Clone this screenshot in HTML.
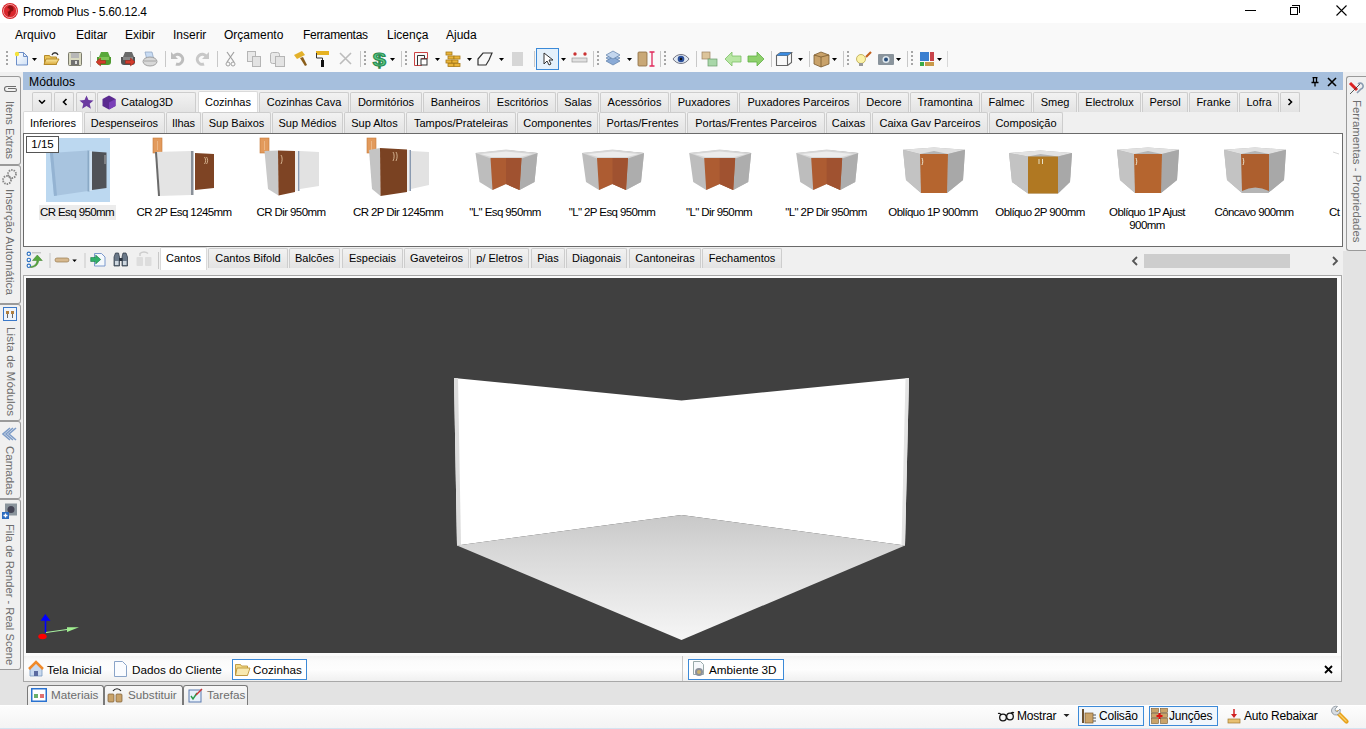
<!DOCTYPE html>
<html><head><meta charset="utf-8">
<style>
*{box-sizing:border-box;margin:0;padding:0}
html,body{width:1366px;height:729px;overflow:hidden}
body{position:relative;background:#f0f0f0;font-family:"Liberation Sans",sans-serif;font-size:12px;color:#000}
.a{position:absolute}
#title{left:0;top:0;width:1366px;height:23px;background:#fff}
#menu{left:0;top:23px;width:1366px;height:23px;background:#f9f9f9}
#menu span{position:absolute;top:5px;font-size:12px;color:#000}
#tb{left:0;top:46px;width:1366px;height:26px;background:#f9f9f9}
#hdr{left:23px;top:72px;width:1320px;height:18px;background:#a6bfdd}
.tab{position:absolute;height:20px;background:linear-gradient(#f2f2f2,#e3e3e3);border:1px solid #cdcdcd;border-bottom:none;border-radius:2px 2px 0 0;text-align:center;font-size:11px;line-height:19px;white-space:nowrap;color:#000;overflow:hidden}
.tab.sel{background:#fff;border-color:#dadada}
#thumbs{left:23px;top:133px;width:1320px;height:114px;background:#fff;border:1px solid #6a6a6a}
.lbl{position:absolute;width:120px;text-align:center;font-size:11.5px;line-height:13px;color:#000;letter-spacing:-0.6px}
#vp{left:23px;top:275px;width:1319px;height:381px;background:#fbfbfb;border:1px solid #a8a8a8;border-bottom:none}
#vpd{left:26px;top:278px;width:1311px;height:375px;background:#404040;overflow:hidden}
#docs{left:23px;top:656px;width:1319px;height:26px;background:linear-gradient(#f3f3f3 0,#fbfbfb 20%,#fdfdfd 55%,#f0f0f0 100%);border:1px solid #a8a8a8;border-top:none}
#status{left:0;top:705px;width:1366px;height:24px;background:linear-gradient(#fdfdfd,#f3f3f3);border-top:1px solid #fff}
.vt{position:absolute;left:0;width:21px;background:#f0f0f0;border:1px solid #9a9a9a;border-left:none;border-radius:0 3px 3px 0}
.vtxt{position:absolute;left:4px;writing-mode:vertical-rl;font-size:11.5px;color:#6d6d6d;white-space:nowrap}
.dt{position:absolute;font-size:12px;color:#000;white-space:nowrap}
.sel3{position:absolute;border:1px solid #3c8ad8;background:#fff}
</style></head><body>
<div id="title" class="a">
 <svg class="a" style="left:1px;top:2px" width="18" height="18" viewBox="0 0 18 18"><circle cx="9" cy="9" r="8" fill="#d9262c"/><circle cx="9" cy="9" r="6.6" fill="none" stroke="#f3b0b0" stroke-width="0.8"/><path d="M8 3.5c3 0 5 1.5 4.5 4c-0.3 1.5-1.5 2-2.5 2.2c-0.5 2-1 4-3 5c0.5-1.5 0.3-3.5-0.5-5c1-0.2 2.2-0.8 2.2-2c0-1-1-1.8-2.5-1.8z" fill="#8a1010"/></svg>
 <div class="a" style="left:23px;top:5px;font-size:12px;letter-spacing:-0.25px">Promob Plus - 5.60.12.4</div>
 <div class="a" style="left:1245px;top:10px;width:11px;height:1px;background:#000"></div>
 <div class="a" style="left:1290px;top:7px;width:8px;height:8px;border:1px solid #000"></div>
 <div class="a" style="left:1292px;top:5px;width:8px;height:8px;border-top:1px solid #000;border-right:1px solid #000"></div>
 <svg class="a" style="left:1335px;top:4px" width="13" height="13" viewBox="0 0 13 13"><path d="M1.5 1.5L11.5 11.5M11.5 1.5L1.5 11.5" stroke="#000" stroke-width="1.1"/></svg>
</div>
<div id="menu" class="a">
 <span style="left:15px">Arquivo</span>
 <span style="left:76px">Editar</span>
 <span style="left:125px">Exibir</span>
 <span style="left:173px">Inserir</span>
 <span style="left:224px">Orçamento</span>
 <span style="left:303px;letter-spacing:-0.3px">Ferramentas</span>
 <span style="left:387px">Licença</span>
 <span style="left:446px">Ajuda</span>
</div>
<div id="tb" class="a"></div>
<svg class="a" style="left:0;top:46px" width="960" height="26" viewBox="0 46 960 26">
<defs>
<linearGradient id="gfold" x1="0" y1="0" x2="0" y2="1"><stop offset="0" stop-color="#fbe9a0"/><stop offset="1" stop-color="#d9a93c"/></linearGradient>
<linearGradient id="gpage" x1="0" y1="0" x2="1" y2="1"><stop offset="0" stop-color="#fff"/><stop offset="1" stop-color="#cfe0f5"/></linearGradient>
</defs>
<g fill="#a6a6a6">
<rect x="6" y="51" width="2" height="2"/><rect x="6" y="55" width="2" height="2"/><rect x="6" y="59" width="2" height="2"/><rect x="6" y="63" width="2" height="2"/>
</g>
<!-- new -->
<path d="M16.5 52.5h7l4 4v8.5h-11z" fill="url(#gpage)" stroke="#6d8fc8"/>
<path d="M23.5 52.5v4h4" fill="none" stroke="#6d8fc8"/>
<circle cx="17" cy="54" r="2.2" fill="#f5e33a"/>
<path d="M32 58h5l-2.5 3z" fill="#000"/>
<!-- open -->
<path d="M44.5 55.5h5l1 1.5h6v7.5h-12z" fill="#e9c45a" stroke="#b58a2a"/>
<path d="M46 59h13l-3 5.5h-12z" fill="url(#gfold)" stroke="#b58a2a"/>
<path d="M52 55c1-3 5-3 6 0" fill="none" stroke="#333" stroke-width="1.3"/>
<!-- save -->
<rect x="68.5" y="52.5" width="13" height="13" rx="1" fill="#d9d9c0" stroke="#7c7c6e"/>
<rect x="71" y="53" width="8" height="5" fill="#b7b7b7"/>
<rect x="71" y="60" width="8" height="5" fill="#707070"/><rect x="75" y="61" width="2" height="3" fill="#ddd"/>
<rect x="90" y="51" width="1" height="16" fill="#c8c8c8"/>
<!-- green/red -->
<path d="M99 57l2-5h7l2 5" fill="#58a83a"/>
<path d="M97 57h14v5c0 2-1 3-3 3h-8c-2 0-3-1-3-3z" fill="#4f9a30"/>
<rect x="99" y="57" width="10" height="3" fill="#7cc455"/>
<path d="M96 62l4.5-4v2.5h5v3h-5v2.5z" fill="#d33b2c" stroke="#a52418" stroke-width="0.5"/>
<path d="M123 57l2-5h7l2 5" fill="#6a6a6a"/>
<path d="M121 57h14v5c0 2-1 3-3 3h-8c-2 0-3-1-3-3z" fill="#555"/>
<rect x="123" y="57" width="10" height="3" fill="#888"/>
<path d="M135 62l-4.5-4v2.5h-5v3h5v2.5z" fill="#d33b2c" stroke="#a52418" stroke-width="0.5"/>
<!-- printer -->
<path d="M145 52h7l1.5 6h-7z" fill="#c9dcf3" stroke="#8aa0c0" stroke-width="0.7"/>
<ellipse cx="150" cy="61.5" rx="7" ry="4.5" fill="#d8d8d8" stroke="#8f8f8f" stroke-width="0.8"/>
<path d="M144 61h12" stroke="#9a9a9a" stroke-width="0.8"/>
<rect x="165" y="51" width="1" height="16" fill="#c8c8c8"/>
<!-- undo redo -->
<path d="M174 56a5 5 0 1 1 2 8" fill="none" stroke="#bdbdbd" stroke-width="3"/>
<path d="M171 52v7h7z" fill="#bdbdbd"/>
<path d="M206 56a5 5 0 1 0 -2 8" fill="none" stroke="#c8c8c8" stroke-width="3"/>
<path d="M209 52v7h-7z" fill="#c8c8c8"/>
<rect x="217" y="51" width="1" height="16" fill="#c8c8c8"/>
<!-- cut -->
<path d="M227 52l7 10M234 52l-7 10" stroke="#a0a0a0" stroke-width="1.2"/>
<circle cx="228" cy="64" r="2" fill="none" stroke="#a0a0a0"/><circle cx="233" cy="64" r="2" fill="none" stroke="#a0a0a0"/>
<!-- copy -->
<rect x="247.5" y="51.5" width="8" height="10" fill="#e8e8e8" stroke="#b5b5b5"/>
<rect x="252.5" y="56.5" width="8" height="10" fill="#e3e3e3" stroke="#b5b5b5"/>
<!-- paste -->
<rect x="270.5" y="52.5" width="9" height="11" rx="2" fill="#e8e8e8" stroke="#b5b5b5"/>
<rect x="275.5" y="56.5" width="9" height="10" fill="#e3e3e3" stroke="#b5b5b5"/>
<!-- hammer -->
<path d="M294 55l8-4 3 4-8 4z" fill="#e3b12b"/>
<path d="M300 58l5 8 2-1-4-8z" fill="#8b5e1a"/>
<!-- roller -->
<rect x="316" y="51" width="13" height="4" fill="#e6b222"/>
<path d="M316.5 53v5h6v3" fill="none" stroke="#333"/>
<rect x="321" y="60" width="3" height="7" fill="#111"/>
<!-- X -->
<path d="M340 53l11 11M351 53l-11 11" stroke="#bcbcbc" stroke-width="1.6"/>
<rect x="360" y="51" width="1" height="16" fill="#c8c8c8"/>
<g fill="#a6a6a6"><rect x="364" y="51" width="2" height="2"/><rect x="364" y="55" width="2" height="2"/><rect x="364" y="59" width="2" height="2"/><rect x="364" y="63" width="2" height="2"/></g>
<!-- dollar -->
<text x="371.5" y="66.5" font-family="Liberation Sans" font-weight="bold" font-size="19" fill="#5cc884" stroke="#2a8a50" stroke-width="1" transform="translate(-91.5 0) scale(1.25 1)">$</text>
<path d="M390 58h5l-2.5 3z" fill="#000"/>
<rect x="401" y="51" width="1" height="16" fill="#c8c8c8"/>
<g fill="#a6a6a6"><rect x="405" y="51" width="2" height="2"/><rect x="405" y="55" width="2" height="2"/><rect x="405" y="59" width="2" height="2"/><rect x="405" y="63" width="2" height="2"/></g>
<!-- wall -->
<path d="M414.5 52.5h13v6h-6v7h-7z" fill="none" stroke="#c44"/>
<path d="M417.5 55.5h7v3M417.5 55.5v10" fill="none" stroke="#333"/>
<rect x="421" y="59" width="6" height="6" fill="#fff" stroke="#333"/>
<path d="M435 58h5l-2.5 3z" fill="#000"/>
<!-- bricks -->
<g fill="#e9b43a" stroke="#a87a18" stroke-width="0.8">
<rect x="446" y="52" width="6" height="3"/><rect x="448" y="56" width="6" height="3"/><rect x="454" y="56" width="6" height="3"/><rect x="446" y="60" width="6" height="3"/><rect x="452" y="60" width="6" height="3"/><rect x="448" y="63.5" width="6" height="3"/><rect x="454" y="63.5" width="6" height="3"/></g>
<path d="M467 58h5l-2.5 3z" fill="#000"/>
<!-- shape -->
<path d="M478 59l5-6h9l-3 7-3 5h-8z" fill="none" stroke="#333" stroke-width="1.2"/>
<path d="M499 58h5l-2.5 3z" fill="#000"/>
<rect x="512" y="52" width="11" height="14" fill="#d6d6d6"/>
<rect x="534" y="51" width="1" height="16" fill="#c8c8c8"/>
<!-- selected pointer -->
<rect x="536.5" y="48.5" width="22" height="21" fill="#e5f1fb" stroke="#3c8ad8"/>
<path d="M544 53v11l3-3 2 4 2-1-2-4h4z" fill="#fff" stroke="#333"/>
<path d="M561 58h5l-2.5 3z" fill="#000"/>
<!-- ruler -->
<rect x="572" y="58" width="15" height="4" fill="#e0e0e0" stroke="#999" stroke-width="0.7"/>
<circle cx="575" cy="54" r="1.7" fill="#c33"/><circle cx="585" cy="54" r="1.7" fill="#c33"/>
<rect x="593" y="51" width="1" height="16" fill="#c8c8c8"/>
<g fill="#a6a6a6"><rect x="597" y="51" width="2" height="2"/><rect x="597" y="55" width="2" height="2"/><rect x="597" y="59" width="2" height="2"/><rect x="597" y="63" width="2" height="2"/></g>
<!-- layers -->
<path d="M606 58l7-4 7 4-7 4z" fill="#9fbbe0" stroke="#5f7fa8" stroke-width="0.7"/>
<path d="M606 61l7-4 7 4-7 4z" fill="#8aaad6" stroke="#5f7fa8" stroke-width="0.7"/>
<path d="M606 55l7-4 7 4-7 4z" fill="#c3d6ee" stroke="#5f7fa8" stroke-width="0.7"/>
<path d="M627 58h5l-2.5 3z" fill="#000"/>
<!-- door -->
<rect x="638" y="52" width="9" height="14" rx="1" fill="#c9a877" stroke="#8a6a40" stroke-width="0.8"/>
<path d="M652 52v14M649.5 52h5M649.5 66h5" stroke="#e0285a" stroke-width="1.3"/>
<rect x="660" y="51" width="1" height="16" fill="#c8c8c8"/>
<g fill="#a6a6a6"><rect x="664" y="51" width="2" height="2"/><rect x="664" y="55" width="2" height="2"/><rect x="664" y="59" width="2" height="2"/><rect x="664" y="63" width="2" height="2"/></g>
<!-- eye -->
<path d="M673 59c4-6 12-6 16 0c-4 6-12 6-16 0z" fill="#dfe8f2" stroke="#556" stroke-width="0.8"/>
<circle cx="681" cy="59" r="3.3" fill="#2b4f9b"/><circle cx="681" cy="59" r="1.2" fill="#111"/>
<rect x="696" y="51" width="1" height="16" fill="#c8c8c8"/>
<!-- cubes -->
<rect x="702" y="52" width="8" height="7" fill="#dcc49a" stroke="#9a8060" stroke-width="0.7"/>
<rect x="708" y="59" width="9" height="7" fill="#a9d7a9" stroke="#6a9a6a" stroke-width="0.7"/>
<!-- arrows -->
<path d="M725 59l7-7v4h9v6h-9v4z" fill="#b8e6a4" stroke="#7cbf66" stroke-width="0.8"/>
<path d="M764 59l-7-7v4h-9v6h9v4z" fill="#8ed06c" stroke="#5fae44" stroke-width="0.8"/>
<rect x="771" y="51" width="1" height="16" fill="#c8c8c8"/>
<!-- box3d -->
<path d="M776.5 55.5h11v10h-11z M776.5 55.5l4-3h11l-4 3 M791.5 52.5v10l-4 3" fill="none" stroke="#666" stroke-width="1.1"/>
<path d="M780.5 52.5h11l-4 3h-11z" fill="#3b8be0"/>
<path d="M798 58h5l-2.5 3z" fill="#000"/>
<rect x="809" y="51" width="1" height="16" fill="#c8c8c8"/>
<!-- crate -->
<path d="M814 55l7-3 8 3v9l-8 3-7-3z" fill="#c9a26a" stroke="#7a5a30" stroke-width="0.8"/>
<path d="M821 57v10M814 55l7 2 8-2" fill="none" stroke="#7a5a30" stroke-width="0.8"/>
<path d="M832 58h5l-2.5 3z" fill="#000"/>
<rect x="843" y="51" width="1" height="16" fill="#c8c8c8"/>
<g fill="#a6a6a6"><rect x="847" y="51" width="2" height="2"/><rect x="847" y="55" width="2" height="2"/><rect x="847" y="59" width="2" height="2"/><rect x="847" y="63" width="2" height="2"/></g>
<!-- bulb -->
<circle cx="861" cy="59" r="4.5" fill="#fbf2a8" stroke="#b9a64a" stroke-width="0.8"/>
<rect x="859" y="63" width="4" height="3" fill="#999"/>
<path d="M866 57l5-5" stroke="#c3601c" stroke-width="2.2"/>
<!-- camera -->
<rect x="878" y="54" width="16" height="11" rx="1" fill="#8a949c"/>
<circle cx="886" cy="59.5" r="3.5" fill="#dfe8ee"/><circle cx="886" cy="59.5" r="2" fill="#2b4f7b"/>
<path d="M896 58h5l-2.5 3z" fill="#000"/>
<rect x="907" y="51" width="1" height="16" fill="#c8c8c8"/>
<g fill="#a6a6a6"><rect x="911" y="51" width="2" height="2"/><rect x="911" y="55" width="2" height="2"/><rect x="911" y="59" width="2" height="2"/><rect x="911" y="63" width="2" height="2"/></g>
<!-- colors -->
<rect x="920" y="52" width="9" height="9" fill="#3a7fd0"/><rect x="930" y="52" width="4" height="9" fill="#c8434a"/>
<rect x="920" y="62" width="4" height="4" fill="#3bab4a"/><rect x="925" y="62" width="9" height="4" fill="#c99a4a"/>
<path d="M937 58h5l-2.5 3z" fill="#000"/>
<rect x="947" y="51" width="1" height="16" fill="#d8d8d8"/>
</svg>


<!-- left vertical tabs -->
<div class="vt" style="top:76px;height:89px"><svg class="a" style="left:3px;top:7px" width="15" height="9" viewBox="0 0 15 9"><path d="M13 2.5H4a2.5 2.5 0 0 0 0 5h8a1.5 1.5 0 0 0 0-3H5" fill="none" stroke="#6d6d6d" stroke-width="1.1"/></svg><div class="vtxt" style="top:24px;font-size:11px">Itens Extras</div></div>
<div class="vt" style="top:165px;height:139px"><svg class="a" style="left:2px;top:3px" width="16" height="16" viewBox="0 0 16 16"><circle cx="10" cy="5" r="4" fill="none" stroke="#888" stroke-width="1.8" stroke-dasharray="1.5 1"/><circle cx="5" cy="11" r="4" fill="none" stroke="#888" stroke-width="1.8" stroke-dasharray="1.5 1"/></svg><div class="vtxt" style="top:23px;font-size:11.7px">Inserção Automática</div></div>
<div class="vt" style="top:304px;height:117px"><svg class="a" style="left:3px;top:2px" width="14" height="14" viewBox="0 0 14 14"><rect x="0.5" y="0.5" width="13" height="13" fill="#eef4fb" stroke="#3a78c8"/><rect x="3" y="4" width="3" height="3" fill="#b08040"/><rect x="8" y="4" width="3" height="3" fill="#b08040"/><path d="M4.5 7v4M9.5 7v4" stroke="#666"/></svg><div class="vtxt" style="top:22px;font-size:11.8px">Lista de Módulos</div></div>
<div class="vt" style="top:421px;height:78px"><svg class="a" style="left:2px;top:5px" width="16" height="14" viewBox="0 0 16 14"><path d="M8 1L1 7l7 6M11 1L4 7l7 6M14 1L7 7l7 6" fill="none" stroke="#7c9cc8" stroke-width="1.6"/></svg><div class="vtxt" style="top:24px">Camadas</div></div>
<div class="vt" style="top:499px;height:171px"><svg class="a" style="left:2px;top:3px" width="16" height="16" viewBox="0 0 16 16"><rect x="3" y="0.5" width="12" height="12" fill="#8a949c"/><circle cx="9" cy="6.5" r="3.5" fill="#445"/><rect x="0" y="9" width="7" height="7" fill="#2c6cc0"/><path d="M3.5 10.5v4M1.5 12.5h4" stroke="#fff" stroke-width="1.3"/></svg><div class="vtxt" style="top:24px;font-size:11.2px">Fila de Render - Real Scene</div></div>

<!-- right vertical tab -->
<div class="a" style="left:1346px;top:76px;width:20px;height:175px;background:#f0f0f0;border:1px solid #9a9a9a;border-right:none;border-radius:3px 0 0 3px"></div>
<svg class="a" style="left:1348px;top:80px" width="16" height="16" viewBox="0 0 16 16"><path d="M2 3l7 7" stroke="#d22" stroke-width="3"/><path d="M2 14L13 3" stroke="#333" stroke-width="0.8"/><path d="M10 4a3 3 0 1 1 3 5l-4 4" fill="none" stroke="#8a9ab0" stroke-width="1.6"/></svg>
<div class="vtxt" style="left:1350.5px;top:100px;font-size:11.4px">Ferramentas - Propriedades</div>

<div id="hdr" class="a"><div class="a" style="left:6px;top:3px;font-size:12.2px">Módulos</div>
 <svg class="a" style="left:1287px;top:5px" width="10" height="10" viewBox="0 0 10 10"><path d="M2.5 0.5h5M3.5 0.5v5M6.5 0.5v5M1.5 5.5h7M5 5.5v4" stroke="#000" stroke-width="1.3" fill="none"/></svg>
 <svg class="a" style="left:1304px;top:5px" width="10" height="10" viewBox="0 0 10 10"><path d="M1 1L9 9M9 1L1 9" stroke="#000" stroke-width="1.6"/></svg>
</div>

<!-- tab row 1 -->
<div class="tab" style="left:32px;top:92px;width:20px"><svg class="a" style="left:5px;top:6px" width="8" height="6" viewBox="0 0 8 6"><path d="M1 1.2L4 4.2L7 1.2" fill="none" stroke="#000" stroke-width="1.6"/></svg></div>
<div class="tab" style="left:54px;top:92px;width:20px"><svg class="a" style="left:7px;top:5px" width="6" height="8" viewBox="0 0 6 8"><path d="M4.5 1L1.5 4L4.5 7" fill="none" stroke="#000" stroke-width="1.6"/></svg></div>
<div class="tab" style="left:76px;top:92px;width:20px"><svg class="a" style="left:2px;top:2px" width="15" height="15" viewBox="0 0 15 15"><path d="M7.5 0.5l2 4.6 5 .4-3.8 3.3 1.2 4.9-4.4-2.7-4.4 2.7 1.2-4.9L0.5 5.5l5-.4z" fill="#6b3aa0"/></svg></div>
<div class="tab" style="left:97px;top:92px;width:99px;text-align:left;padding-left:23px">Catalog3D<svg class="a" style="left:4px;top:2px" width="14" height="15" viewBox="0 0 14 15"><path d="M7 0.5L13.5 4v7L7 14.5 0.5 11V4z" fill="#5b2a90"/><path d="M7 7.5L13.5 4v7L7 14.5z" fill="#7a3fb8"/></svg></div>
<div class="tab sel" style="left:198px;top:91px;width:60px;height:21px;line-height:21px">Cozinhas</div>
<div class="tab" style="left:259px;top:92px;width:90px">Cozinhas Cava</div>
<div class="tab" style="left:350px;top:92px;width:72px">Dormitórios</div>
<div class="tab" style="left:423px;top:92px;width:65px">Banheiros</div>
<div class="tab" style="left:489px;top:92px;width:67px">Escritórios</div>
<div class="tab" style="left:557px;top:92px;width:42px">Salas</div>
<div class="tab" style="left:600px;top:92px;width:69px">Acessórios</div>
<div class="tab" style="left:670px;top:92px;width:68px">Puxadores</div>
<div class="tab" style="left:739px;top:92px;width:119px">Puxadores Parceiros</div>
<div class="tab" style="left:859px;top:92px;width:50px">Decore</div>
<div class="tab" style="left:910px;top:92px;width:70px">Tramontina</div>
<div class="tab" style="left:981px;top:92px;width:51px">Falmec</div>
<div class="tab" style="left:1033px;top:92px;width:44px">Smeg</div>
<div class="tab" style="left:1078px;top:92px;width:63px">Electrolux</div>
<div class="tab" style="left:1142px;top:92px;width:46px">Persol</div>
<div class="tab" style="left:1189px;top:92px;width:49px">Franke</div>
<div class="tab" style="left:1239px;top:92px;width:40px">Lofra</div>
<div class="tab" style="left:1280px;top:92px;width:20px"><svg class="a" style="left:6px;top:5px" width="6" height="8" viewBox="0 0 6 8"><path d="M1.5 1L4.5 4L1.5 7" fill="none" stroke="#000" stroke-width="1.6"/></svg></div>

<!-- tab row 2 -->
<div class="tab sel" style="left:23px;top:111px;width:60px;height:22px;line-height:23px">Inferiores</div>
<div class="tab" style="left:84px;top:112px;width:81px;height:21px;line-height:21px">Despenseiros</div>
<div class="tab" style="left:166px;top:112px;width:35px;height:21px;line-height:21px">Ilhas</div>
<div class="tab" style="left:202px;top:112px;width:69px;height:21px;line-height:21px">Sup Baixos</div>
<div class="tab" style="left:272px;top:112px;width:71px;height:21px;line-height:21px">Sup Médios</div>
<div class="tab" style="left:344px;top:112px;width:61px;height:21px;line-height:21px">Sup Altos</div>
<div class="tab" style="left:406px;top:112px;width:110px;height:21px;line-height:21px">Tampos/Prateleiras</div>
<div class="tab" style="left:517px;top:112px;width:81px;height:21px;line-height:21px">Componentes</div>
<div class="tab" style="left:599px;top:112px;width:87px;height:21px;line-height:21px">Portas/Frentes</div>
<div class="tab" style="left:687px;top:112px;width:138px;height:21px;line-height:21px">Portas/Frentes Parceiros</div>
<div class="tab" style="left:826px;top:112px;width:45px;height:21px;line-height:21px">Caixas</div>
<div class="tab" style="left:872px;top:112px;width:116px;height:21px;line-height:21px">Caixa Gav Parceiros</div>
<div class="tab" style="left:989px;top:112px;width:74px;height:21px;line-height:21px">Composição</div>

<div id="thumbs" class="a"></div>
<svg class="a" style="left:24px;top:134px" width="1318" height="112" viewBox="24 134 1318 112">
<defs>
<linearGradient id="gside" x1="0" y1="0" x2="1" y2="0"><stop offset="0" stop-color="#b9b9b9"/><stop offset="1" stop-color="#d9d9d9"/></linearGradient>
<linearGradient id="gside2" x1="0" y1="0" x2="1" y2="0"><stop offset="0" stop-color="#d5d5d5"/><stop offset="1" stop-color="#a9a9a9"/></linearGradient>
<linearGradient id="gbrown" x1="0" y1="0" x2="1" y2="0"><stop offset="0" stop-color="#b46a3e"/><stop offset="1" stop-color="#a25a30"/></linearGradient>
</defs>
<rect x="46" y="138" width="64" height="64" fill="#bcd8f0"/>
<rect x="39" y="205" width="77" height="15" fill="#ececec"/>
<path d="M50 153L88 150.5L88 191L54 196Z" fill="#a8c4df"/>
<path d="M50 153L53 153L57 195.5L54 196Z" fill="#94b3d2"/>
<rect x="87.5" y="150.5" width="2" height="41" fill="#8aa9c6"/>
<rect x="89.5" y="151" width="2.5" height="40" fill="#cfe1f1"/>
<path d="M92 151.5L106.5 152.5L106.5 188L92 190Z" fill="#505257"/>
<path d="M105 155v9" stroke="#c8c8c8" stroke-width="0.8"/>
<rect x="153" y="138" width="9" height="15" fill="#e29a5c" stroke="#c77a3a" stroke-width="0.6"/><path d="M157.5 141v9" stroke="#f3c9a0" stroke-width="0.6"/>
<path d="M155 152L191 151L191 195L159 196Z" fill="#e4e4e4"/>
<path d="M155 152L157 152L160 196L158 196Z" fill="#6a6a6a"/>
<rect x="191" y="151" width="2.5" height="44" fill="#8a9098"/>
<path d="M195 153L214 154L214 188L195 190Z" fill="#7e4424"/>
<path d="M204.5 157c1.5 2 1.5 5 0 7M206.5 157c1.5 2 1.5 5 0 7" stroke="#e7c9a6" stroke-width="0.8" fill="none"/>
<rect x="260" y="138" width="9" height="15" fill="#e29a5c" stroke="#c77a3a" stroke-width="0.6"/><path d="M264.5 141v9" stroke="#f3c9a0" stroke-width="0.6"/>
<path d="M264.5 151L278 150.5L278.5 195.5L268 189Z" fill="#c9c9c9"/>
<path d="M278 150.5L295 151L295 192L278.5 195.5Z" fill="#7e4424"/>
<path d="M281 155c1.5 2 1.5 6 0 9" stroke="#e7c9a6" stroke-width="0.8" fill="none"/>
<rect x="295" y="151" width="3" height="40" fill="#eee"/>
<rect x="298" y="151" width="1.5" height="40" fill="#8a9ab0"/>
<path d="M300 151L319 152L319 186L300 189Z" fill="#e2e2e2"/>
<rect x="367" y="138" width="9" height="15" fill="#e29a5c" stroke="#c77a3a" stroke-width="0.6"/><path d="M371.5 141v9" stroke="#f3c9a0" stroke-width="0.6"/>
<path d="M369 150L380 148L380.5 196L372 189Z" fill="#c4c4c4"/>
<path d="M380 148L407 149.5L407 192L380.5 196Z" fill="#7a4222"/>
<path d="M393 152c1.5 2 1.5 6 0 9M396 152c1.5 2 1.5 6 0 9" stroke="#e7c9a6" stroke-width="0.8" fill="none"/>
<rect x="407" y="150" width="2.5" height="41" fill="#eee"/>
<rect x="409.5" y="150" width="1.5" height="41" fill="#8a9ab0"/>
<path d="M411 151L429 152L429 185L411 189Z" fill="#e2e2e2"/>
<polygon points="475.5,153 506.0,150 537.5,153 534.5,182 519.5,190 506.0,184 492.5,190 479.5,182" fill="#bdbdbd"/><polygon points="506.0,150 537.5,153 534.5,182 519.5,190 521.5,158" fill="#adadad"/><polygon points="475.5,153 506.0,149.5 537.5,153 521.5,158.5 490.5,158.5" fill="#d6d6d6"/><polygon points="480.5,154 506.0,151.5 532.5,154 520.5,157 491.5,157" fill="#ececec"/><polygon points="490.5,158 521.5,158 519.5,190 506.0,184 492.5,190" fill="#ad5c32"/><polygon points="506.0,158 521.5,158 519.5,190 506.0,184" fill="#a05230"/>
<polygon points="582.0,153 612.5,150 644.0,153 641.0,182 626.0,190 612.5,184 599.0,190 586.0,182" fill="#bdbdbd"/><polygon points="612.5,150 644.0,153 641.0,182 626.0,190 628.0,158" fill="#adadad"/><polygon points="582.0,153 612.5,149.5 644.0,153 628.0,158.5 597.0,158.5" fill="#d6d6d6"/><polygon points="587.0,154 612.5,151.5 639.0,154 627.0,157 598.0,157" fill="#ececec"/><polygon points="597.0,158 628.0,158 626.0,190 612.5,184 599.0,190" fill="#ad5c32"/><polygon points="612.5,158 628.0,158 626.0,190 612.5,184" fill="#a05230"/>
<polygon points="689.2,153 719.7,150 751.2,153 748.2,182 733.2,190 719.7,184 706.2,190 693.2,182" fill="#bdbdbd"/><polygon points="719.7,150 751.2,153 748.2,182 733.2,190 735.2,158" fill="#adadad"/><polygon points="689.2,153 719.7,149.5 751.2,153 735.2,158.5 704.2,158.5" fill="#d6d6d6"/><polygon points="694.2,154 719.7,151.5 746.2,154 734.2,157 705.2,157" fill="#ececec"/><polygon points="704.2,158 735.2,158 733.2,190 719.7,184 706.2,190" fill="#ad5c32"/><polygon points="719.7,158 735.2,158 733.2,190 719.7,184" fill="#a05230"/>
<polygon points="796.2,153 826.7,150 858.2,153 855.2,182 840.2,190 826.7,184 813.2,190 800.2,182" fill="#bdbdbd"/><polygon points="826.7,150 858.2,153 855.2,182 840.2,190 842.2,158" fill="#adadad"/><polygon points="796.2,153 826.7,149.5 858.2,153 842.2,158.5 811.2,158.5" fill="#d6d6d6"/><polygon points="801.2,154 826.7,151.5 853.2,154 841.2,157 812.2,157" fill="#ececec"/><polygon points="811.2,158 842.2,158 840.2,190 826.7,184 813.2,190" fill="#ad5c32"/><polygon points="826.7,158 842.2,158 840.2,190 826.7,184" fill="#a05230"/>
<polygon points="903.0,149.7 934.0,147.6 965.0,149.7 963.0,180 947.0,193 921.0,193 906.0,180" fill="#b5b5b5"/><polygon points="903.0,149.7 934.0,147.6 965.0,149.7 948.0,154 934.0,151 920.0,154" fill="#e0e0e0"/><polygon points="903.0,149.7 920.0,154 921.0,193 906.0,180" fill="#c3c3c3"/><polygon points="965.0,149.7 948.0,154 947.0,193 963.0,180" fill="#a8a8a8"/><polygon points="920.0,154 948.0,154 947.0,193 921.0,193" fill="#b5652f"/><path d="M922 158c1 2 1 5 0 7" stroke="#eed" stroke-width="0.9" fill="none"/>
<polygon points="1009,153 1040.5,150.5 1072,153 1070,182 1058,193.5 1028,193.5 1012,182" fill="#b5b5b5"/>
<polygon points="1009,153 1040.5,150.5 1072,153 1058,156.5 1040.5,154 1028,156.5" fill="#e2e2e2"/>
<polygon points="1009,153 1028,156.5 1028,193.5 1012,182" fill="#c3c3c3"/>
<polygon points="1072,153 1058,156.5 1058,193.5 1070,182" fill="#a8a8a8"/>
<polygon points="1028,156.5 1058,156.5 1058,193.5 1028,193.5" fill="#b07822"/>
<path d="M1039 159v5M1042.5 159v5" stroke="#eed" stroke-width="0.9"/>
<polygon points="1117.0,149.7 1148.0,147.6 1179.0,149.7 1177.0,180 1161.0,193 1135.0,193 1120.0,180" fill="#b5b5b5"/><polygon points="1117.0,149.7 1148.0,147.6 1179.0,149.7 1162.0,154 1148.0,151 1134.0,154" fill="#e0e0e0"/><polygon points="1117.0,149.7 1134.0,154 1135.0,193 1120.0,180" fill="#c3c3c3"/><polygon points="1179.0,149.7 1162.0,154 1161.0,193 1177.0,180" fill="#a8a8a8"/><polygon points="1134.0,154 1162.0,154 1161.0,193 1135.0,193" fill="#b5652f"/><path d="M1136 158c1 2 1 5 0 7" stroke="#eed" stroke-width="0.9" fill="none"/>
<polygon points="1224.0,149.7 1255.0,147.6 1286.0,149.7 1284.0,180 1268.0,193 1242.0,193 1227.0,180" fill="#b5b5b5"/><polygon points="1224.0,149.7 1255.0,147.6 1286.0,149.7 1269.0,154 1255.0,151 1241.0,154" fill="#e0e0e0"/><polygon points="1224.0,149.7 1241.0,154 1242.0,193 1227.0,180" fill="#c3c3c3"/><polygon points="1286.0,149.7 1269.0,154 1268.0,193 1284.0,180" fill="#a8a8a8"/><path d="M1241 154H1269V191Q1255 184 1242 191Z" fill="#ad5f2e"/><path d="M1243 158c1 2 1 5 0 7" stroke="#eed" stroke-width="0.9" fill="none"/>
<path d="M1333 152l6 2" stroke="#ccc" stroke-width="0.8"/>
</svg>
<div class="a" style="left:26px;top:136px;width:33px;height:17px;border:1px solid #555;background:#fff;text-align:center;line-height:15px;font-size:11.5px">1/15</div>
<div class="lbl" style="left:17px;top:206px">CR Esq 950mm</div>
<div class="lbl" style="left:124px;top:206px">CR 2P Esq 1245mm</div>
<div class="lbl" style="left:231px;top:206px">CR Dir 950mm</div>
<div class="lbl" style="left:338px;top:206px">CR 2P Dir 1245mm</div>
<div class="lbl" style="left:445px;top:206px">"L" Esq 950mm</div>
<div class="lbl" style="left:552px;top:206px">"L" 2P Esq 950mm</div>
<div class="lbl" style="left:659px;top:206px">"L" Dir 950mm</div>
<div class="lbl" style="left:766px;top:206px">"L" 2P Dir 950mm</div>
<div class="lbl" style="left:873px;top:206px">Oblíquo 1P 900mm</div>
<div class="lbl" style="left:980px;top:206px">Oblíquo 2P 900mm</div>
<div class="lbl" style="left:1087px;top:206px">Oblíquo 1P Ajust<br>900mm</div>
<div class="lbl" style="left:1194px;top:206px">Côncavo 900mm</div>
<div class="lbl" style="left:1329px;top:206px;width:20px;text-align:left">Ct</div>
<div class="a" style="left:1343px;top:134px;width:3px;height:113px;background:#f0f0f0"></div>

<!-- bottom toolbar -->
<svg class="a" style="left:24px;top:248px" width="136" height="24" viewBox="24 248 136 24">
 <circle cx="28.8" cy="253.8" r="1.7" fill="#fff" stroke="#2a6fc0" stroke-width="1.1"/><circle cx="28.8" cy="259.9" r="1.7" fill="#fff" stroke="#2a6fc0" stroke-width="1.1"/><circle cx="28.8" cy="265.8" r="1.7" fill="#fff" stroke="#2a6fc0" stroke-width="1.1"/>
 <path d="M32 252.8h9" stroke="#aaa" stroke-width="0.8"/>
 <path d="M30.5 266.5c4 0 6-2.5 6.5-6h-4.5l4.8-5.5 5 5.5h-3.5c-0.8 5-4 7-8.3 7z" fill="#55a83c" stroke="#3a7a28" stroke-width="0.5"/>
 <rect x="49.5" y="253" width="1" height="15" fill="#c8c8c8"/>
 <rect x="55" y="258" width="14" height="4" rx="2" fill="#d6b88e" stroke="#9a7c52" stroke-width="0.7"/>
 <path d="M72.3 259.5h4.5l-2.25 2.6z" fill="#000"/>
 <rect x="84.5" y="253" width="1" height="15" fill="#c8c8c8"/>
 <path d="M94.5 253.5h7l3.5 3.5v9h-10.5z" fill="#f4f8fc" stroke="#6d8fc8" stroke-width="0.9"/>
 <path d="M90.7 257.5h5v-2.5l5 4.5-5 4.5v-2.5h-5z" fill="#2fb06a" stroke="#1a7a44" stroke-width="0.6"/>
 <path d="M114 257l1.5-4h3l1 4v9h-5.5z M122 257l1-4h3l1.5 4v9h-5.5z" fill="#6a7888" stroke="#2a3440" stroke-width="0.7"/>
 <rect x="119" y="258" width="3.5" height="3" fill="#2a3440"/>
 <rect x="115" y="261" width="3.5" height="4" fill="#cfd8e0"/><rect x="123" y="261" width="3.5" height="4" fill="#cfd8e0"/>
 <path d="M140 256v-2.5c2-2 6-2 8 0" fill="none" stroke="#ccc" stroke-width="1.4"/><rect x="136.5" y="257" width="6.5" height="9" rx="1" fill="#ddd"/><rect x="145" y="257" width="6.5" height="9" rx="1" fill="#ddd"/>
 <rect x="158" y="252" width="1" height="17" fill="#c8c8c8"/>
</svg>

<!-- bottom tabs row -->
<div class="tab sel" style="left:160px;top:247px;width:47px;height:23px;line-height:20px">Cantos</div>
<div class="tab" style="left:208px;top:248px;width:80px;height:20px;line-height:19px">Cantos Bifold</div>
<div class="tab" style="left:289px;top:248px;width:51px;height:20px;line-height:19px">Balcões</div>
<div class="tab" style="left:342px;top:248px;width:61px;height:20px;line-height:19px">Especiais</div>
<div class="tab" style="left:404px;top:248px;width:65px;height:20px;line-height:19px">Gaveteiros</div>
<div class="tab" style="left:470px;top:248px;width:59px;height:20px;line-height:19px">p/ Eletros</div>
<div class="tab" style="left:531px;top:248px;width:34px;height:20px;line-height:19px">Pias</div>
<div class="tab" style="left:566px;top:248px;width:61px;height:20px;line-height:19px">Diagonais</div>
<div class="tab" style="left:629px;top:248px;width:72px;height:20px;line-height:19px">Cantoneiras</div>
<div class="tab" style="left:702px;top:248px;width:80px;height:20px;line-height:19px">Fechamentos</div>

<!-- scrollbar -->
<svg class="a" style="left:1128px;top:252px" width="214" height="18" viewBox="0 0 214 18"><path d="M9 5l-4 4 4 4" fill="none" stroke="#555" stroke-width="1.8"/><rect x="16" y="2" width="146" height="14" fill="#cdcdcd"/><path d="M205 5l4 4-4 4" fill="none" stroke="#555" stroke-width="1.8"/></svg>

<div class="a" style="left:1343px;top:251px;width:23px;height:454px;background:#e3e3e3"></div>
<div class="a" style="left:0;top:670px;width:1366px;height:35px;background:#e3e3e3"></div>
<div id="vp" class="a"></div>
<div id="vpd" class="a"></div>
<svg class="a" style="left:26px;top:278px" width="1311" height="375" viewBox="26 278 1311 375">
<defs>
<linearGradient id="gfloor" x1="0" y1="515" x2="0" y2="640" gradientUnits="userSpaceOnUse"><stop offset="0" stop-color="#c8c8c8"/><stop offset="0.3" stop-color="#d8d8d8"/><stop offset="1" stop-color="#f6f6f6"/></linearGradient>
<linearGradient id="gfloor2" x1="458" y1="0" x2="905" y2="0" gradientUnits="userSpaceOnUse"><stop offset="0" stop-color="#000" stop-opacity="0"/><stop offset="0.5" stop-color="#000" stop-opacity="0"/><stop offset="1" stop-color="#000" stop-opacity="0.06"/></linearGradient>
</defs>
<path d="M454 378L681.5 400.5L909 378L905 545.5L681.5 515L457 545.5Z" fill="#ffffff"/>
<path d="M454 378L458 378.3L461 545L457 545.5Z" fill="#dcdcdc"/>
<path d="M909 378L905.5 378.3L901.5 545L905 545.5Z" fill="#e4e4e4"/>
<path d="M457 545.5L681.5 515L905 545.5L681.5 640Z" fill="url(#gfloor)"/>
<!-- axis -->
<path d="M45.5 620V632.5" stroke="#0000ff" stroke-width="1.6"/>
<path d="M45.3 614L50.5 620.8H40.5Z" fill="#0000ff"/>
<path d="M46 632.5L67 629.5" stroke="#a8f0a0" stroke-width="1.2"/>
<path d="M67 627.3L79 627.3L67 632Z" fill="#a0f090"/>
<ellipse cx="42.5" cy="636.5" rx="4.2" ry="2.8" fill="#ff0000"/>
</svg>


<div id="docs" class="a"></div>
<svg class="a" style="left:28px;top:660px" width="16" height="17" viewBox="0 0 16 17"><path d="M2 8l6-6 6 6v8H2z" fill="#c9d9ee" stroke="#7a9ac0" stroke-width="0.8"/><path d="M1 9l7-7 7 7" fill="none" stroke="#f08a2a" stroke-width="2.5"/><rect x="6" y="11" width="4" height="5" fill="#5a6aa0"/></svg>
<div class="dt" style="left:47px;top:663px;font-size:11.7px">Tela Inicial</div>
<svg class="a" style="left:114px;top:661px" width="14" height="16" viewBox="0 0 14 16"><path d="M0.5 0.5h8l4 4v11h-12z" fill="#fafcff" stroke="#8aa4c8"/></svg>
<div class="dt" style="left:132px;top:663px;font-size:11.7px">Dados do Cliente</div>
<div class="sel3" style="left:232px;top:659px;width:75px;height:21px"></div>
<svg class="a" style="left:235px;top:662px" width="16" height="14" viewBox="0 0 16 14"><path d="M0.5 2.5h5l1 1.5h6v9h-12z" fill="#f3dc8a" stroke="#b58a2a" stroke-width="0.8"/><path d="M2 6h13l-2.5 7.5H0.5z" fill="#f8e9b0" stroke="#b58a2a" stroke-width="0.8"/></svg>
<div class="dt" style="left:253px;top:663px;font-size:11.7px">Cozinhas</div>
<div class="a" style="left:682px;top:656px;width:1px;height:25px;background:#c8c8c8"></div>
<div class="sel3" style="left:688px;top:659px;width:96px;height:21px"></div>
<svg class="a" style="left:691px;top:661px" width="16" height="16" viewBox="0 0 16 16"><path d="M2.5 0.5h7l3 3v10h-10z" fill="#f6f8fb" stroke="#9aa"/><circle cx="8" cy="11" r="4" fill="#8a8f9a"/><circle cx="8" cy="11" r="2" fill="#c8b070"/></svg>
<div class="dt" style="left:709px;top:663px;font-size:11.7px">Ambiente 3D</div>
<svg class="a" style="left:1324px;top:665px" width="9" height="9" viewBox="0 0 9 9"><path d="M1 1L8 8M8 1L1 8" stroke="#000" stroke-width="1.8"/></svg>

<!-- bottom panel tabs -->
<div class="a" style="left:27px;top:685px;width:77px;height:20px;background:linear-gradient(#f8f8f8,#ececec);border:1px solid #7a7a7a;border-bottom:none;border-radius:3px 3px 0 0"></div>
<div class="a" style="left:104px;top:685px;width:79px;height:20px;background:linear-gradient(#f8f8f8,#ececec);border:1px solid #7a7a7a;border-bottom:none;border-radius:3px 3px 0 0"></div>
<div class="a" style="left:183px;top:685px;width:65px;height:20px;background:linear-gradient(#f8f8f8,#ececec);border:1px solid #7a7a7a;border-bottom:none;border-radius:3px 3px 0 0"></div>
<svg class="a" style="left:31px;top:688px" width="16" height="14" viewBox="0 0 16 14"><rect x="0.75" y="0.75" width="14.5" height="12.5" fill="#fff" stroke="#2a72d0" stroke-width="1.5"/><rect x="3" y="6" width="4" height="4" fill="#6ab06a"/><rect x="9" y="6" width="4" height="4" fill="#e07070"/></svg>
<div class="dt" style="left:51px;top:688px;font-size:11.7px;color:#6d6d6d">Materiais</div>
<svg class="a" style="left:107px;top:687px" width="18" height="16" viewBox="0 0 18 16"><path d="M6 4c2-3 6-3 8 0" fill="none" stroke="#222" stroke-width="1.2"/><rect x="1" y="7" width="6" height="8" rx="1" fill="#c9a36a" stroke="#7a5a30" stroke-width="0.7"/><rect x="9" y="7" width="6" height="8" rx="1" fill="#c9a36a" stroke="#7a5a30" stroke-width="0.7"/></svg>
<div class="dt" style="left:128px;top:688px;font-size:11.7px;color:#6d6d6d">Substituir</div>
<svg class="a" style="left:188px;top:687px" width="16" height="16" viewBox="0 0 16 16"><rect x="1" y="3" width="12" height="12" fill="#e8f0fa" stroke="#5a7ab0"/><path d="M3 9l2 3 4-6" fill="none" stroke="#2a9a4a" stroke-width="1.4"/><path d="M8 8l6-6" stroke="#c33" stroke-width="1.5"/></svg>
<div class="dt" style="left:207px;top:688px;font-size:11.7px;color:#6d6d6d">Tarefas</div>

<div id="status" class="a"></div>
<div class="a" style="left:0;top:728px;width:1366px;height:1px;background:#d5e3f0"></div>
<svg class="a" style="left:996px;top:709px" width="20" height="15" viewBox="0 0 20 15"><circle cx="7" cy="8.5" r="3.3" fill="none" stroke="#111" stroke-width="1.3"/><circle cx="14" cy="7.5" r="3.3" fill="none" stroke="#111" stroke-width="1.3"/><path d="M2 4.5c1.5-0.5 2.5 0 3 1.5M15 4.3c1-0.8 2-1 3-0.5" fill="none" stroke="#111" stroke-width="1.3"/></svg>
<div class="dt" style="left:1017px;top:709px;font-size:12px;letter-spacing:-0.2px">Mostrar</div>
<svg class="a" style="left:1063px;top:713px" width="7" height="5" viewBox="0 0 7 5"><path d="M0.5 1h6l-3 3z" fill="#222"/></svg>
<div class="sel3" style="left:1078px;top:706px;width:66px;height:20px;background:#f0f6fc"></div>
<svg class="a" style="left:1081px;top:708px" width="16" height="16" viewBox="0 0 16 16"><rect x="1" y="1" width="2" height="14" fill="#6a5030"/><rect x="4" y="5" width="8" height="10" fill="#c9a36a" stroke="#7a5a30" stroke-width="0.7"/><path d="M12 7h3M12 10h3M12 13h3" stroke="#555"/></svg>
<div class="dt" style="left:1099px;top:709px;font-size:12px;letter-spacing:-0.2px">Colisão</div>
<div class="sel3" style="left:1149px;top:706px;width:69px;height:20px;background:#f0f6fc"></div>
<svg class="a" style="left:1151px;top:708px" width="17" height="16" viewBox="0 0 17 16"><rect x="0.5" y="0.5" width="7" height="4" fill="#c9a36a" stroke="#7a5a30" stroke-width="0.6"/><rect x="9.5" y="0.5" width="7" height="4" fill="#c9a36a" stroke="#7a5a30" stroke-width="0.6"/><rect x="0.5" y="5.5" width="7" height="4" fill="#c9a36a" stroke="#7a5a30" stroke-width="0.6"/><rect x="9.5" y="5.5" width="7" height="4" fill="#c9a36a" stroke="#7a5a30" stroke-width="0.6"/><rect x="0.5" y="10.5" width="7" height="5" fill="#c9a36a" stroke="#7a5a30" stroke-width="0.6"/><rect x="9.5" y="10.5" width="7" height="5" fill="#c9a36a" stroke="#7a5a30" stroke-width="0.6"/><path d="M8.5 5v6M5.5 8h6" stroke="#e01010" stroke-width="2"/></svg>
<div class="dt" style="left:1169px;top:709px;font-size:12px;letter-spacing:-0.2px">Junções</div>
<svg class="a" style="left:1227px;top:708px" width="14" height="16" viewBox="0 0 14 16"><path d="M7 1v7" stroke="#d02020" stroke-width="1.5"/><path d="M4 6l3 4 3-4z" fill="#d02020"/><rect x="1" y="11" width="12" height="4" fill="#e8c070" stroke="#a07a30" stroke-width="0.7"/></svg>
<div class="dt" style="left:1244px;top:709px;font-size:12px;letter-spacing:-0.2px">Auto Rebaixar</div>
<svg class="a" style="left:1330px;top:705px" width="20" height="20" viewBox="0 0 20 20"><path d="M7.5 7.5L16.5 16.5" stroke="#e8a21a" stroke-width="4.2" stroke-linecap="round"/><path d="M7.5 7.5L16.5 16.5" stroke="#f7d070" stroke-width="1.2"/><path d="M1.5 5a4.5 4.5 0 0 1 6-3.5l-2.5 2.5 0.5 2 2 0.5 2.5-2.5a4.5 4.5 0 0 1-3.5 6 4.5 4.5 0 0 1-5-5z" fill="#d8dde2" stroke="#7a8590" stroke-width="0.7"/></svg>
</body></html>
